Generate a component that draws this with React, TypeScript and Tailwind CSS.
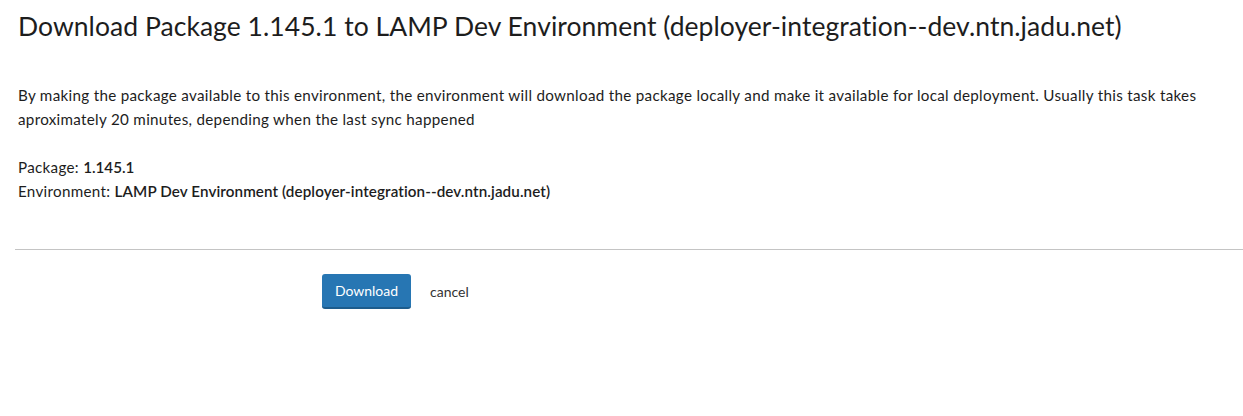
export default function App() {
  return (
    <div className="min-h-[416px] w-[1243px] bg-white font-['Lato',sans-serif] text-[#1d1d1d]">
      <div className="pl-[18px] pr-4">
        <h1 className="pt-[10px] text-[26.5px] leading-[32px] font-normal tracking-[0.05px]">
          Download Package 1.145.1 to LAMP Dev Environment (deployer-integration--dev.ntn.jadu.net)
        </h1>

        <p className="mt-[41px] text-[15.2px] leading-[24px] tracking-[0.3px]">
          By making the package available to this environment, the environment will download the package locally and make it available for local deployment. Usually this task takes aproximately 20 minutes, depending when the last sync happened
        </p>

        <div className="mt-[24px] text-[15.2px] leading-[24px]">
          <div>
            <span className="tracking-[0.3px]">Package: </span>
            <span className="font-semibold">1.145.1</span>
          </div>
          <div>
            <span className="tracking-[0.3px]">Environment: </span>
            <span className="font-semibold tracking-[0.1px]">LAMP Dev Environment (deployer-integration--dev.ntn.jadu.net)</span>
          </div>
        </div>
      </div>

      <hr className="mt-[46px] ml-[15px] border-0 border-t border-[#c4c4c4]" />

      <div className="mt-[24px] flex items-center pl-[322px]">
        <button className="h-[35px] w-[89px] rounded-[3px] border-b-2 border-[#1d5c8c] bg-[#2776b3] text-[14px] text-white">
          Download
        </button>
        <a className="ml-[19px] text-[14px] text-[#333]">cancel</a>
      </div>
    </div>
  );
}
